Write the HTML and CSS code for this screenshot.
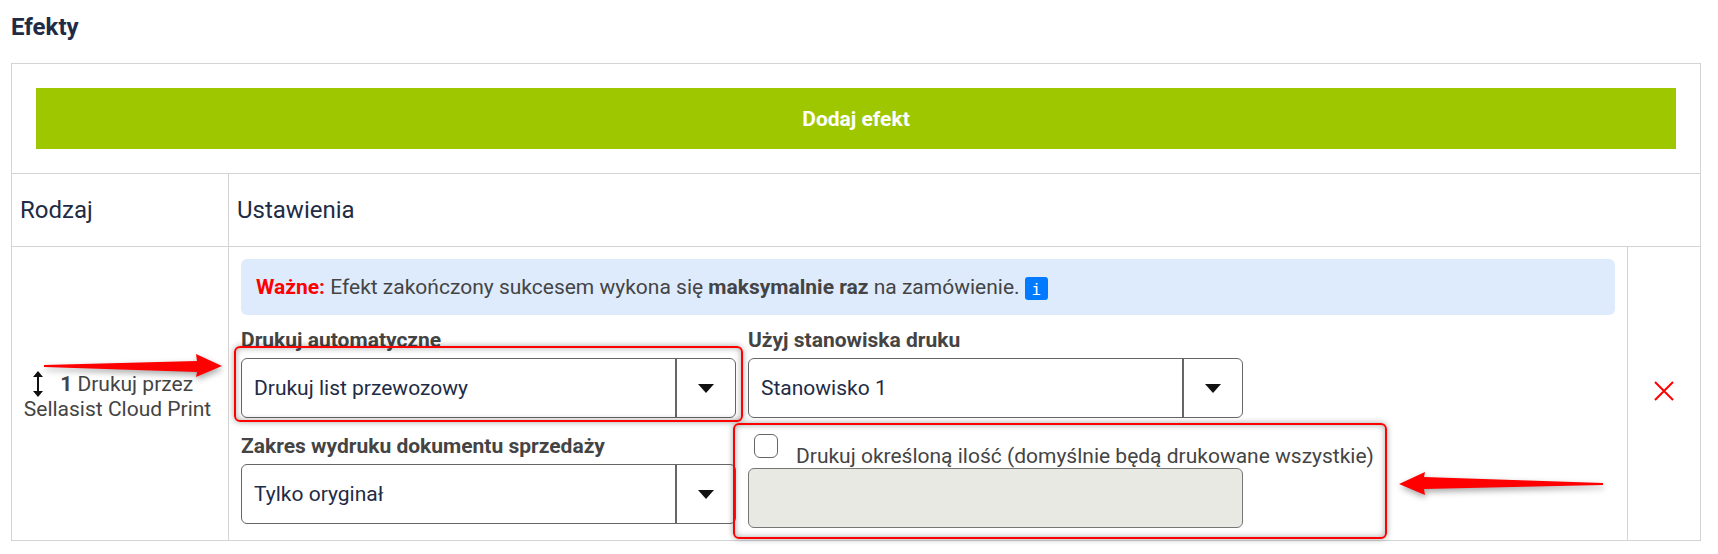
FILE: index.html
```html
<!DOCTYPE html>
<html lang="pl">
  <head>
    <meta charset="utf-8" />
    <title>Efekty</title>
    <link rel="stylesheet" href="styles.css">
  </head>

  <body>
    <h2 class="title">Efekty</h2>

    <table class="effects">
      <colgroup>
        <col class="col-type">
        <col>
        <col class="col-remove">
      </colgroup>
      <tr>
        <td class="add-cell" colspan="3">
          <a class="add-btn" href="#">Dodaj efekt</a>
        </td>
      </tr>
      <tr class="head">
        <td>Rodzaj</td>
        <td colspan="2">Ustawienia</td>
      </tr>
      <tr>
        <td class="type-cell">
          <span class="type-first">
            <svg class="sort-icon" width="12" height="26" viewBox="0 0 12 26">
              <path d="M6 3V23" stroke="#111" stroke-width="2"/>
              <path d="M6 0L11 6H1Z M6 26L11 20H1Z" fill="#111"/>
            </svg>
            <b>1</b> Drukuj przez
          </span><br>Sellasist Cloud Print
        </td>
        <td class="settings-cell">
          <div class="alert">
            <b class="alert-red">Ważne:</b> Efekt zakończony sukcesem wykona się
            <b>maksymalnie raz</b> na zamówienie.
            <span class="info-badge">i</span>
          </div>

          <div class="form-grid">
            <div class="field">
              <div class="field-label">Drukuj automatyczne</div>
              <div class="select">
                <span class="select-value">Drukuj list przewozowy</span>
                <span class="select-btn"><i class="caret"></i></span>
              </div>
            </div>
            <div class="field">
              <div class="field-label">Użyj stanowiska druku</div>
              <div class="select">
                <span class="select-value">Stanowisko 1</span>
                <span class="select-btn"><i class="caret"></i></span>
              </div>
            </div>
            <div class="field">
              <div class="field-label">Zakres wydruku dokumentu sprzedaży</div>
              <div class="select">
                <span class="select-value">Tylko oryginał</span>
                <span class="select-btn"><i class="caret"></i></span>
              </div>
            </div>
            <div class="field">
              <label class="check-row">
                <span class="check-box"></span>
                <span class="check-text">Drukuj określoną ilość (domyślnie będą drukowane wszystkie)</span>
              </label>
              <div class="input-disabled"></div>
            </div>
          </div>
        </td>
        <td class="remove-cell">
          <svg width="20" height="20" viewBox="0 0 20 20">
            <path d="M1 1L19 19M19 1L1 19" stroke="#f00" stroke-width="2"/>
          </svg>
        </td>
      </tr>
    </table>

    <!-- adnotacje na zrzucie -->
    <div class="mark mark-auto"></div>
    <div class="mark mark-qty"></div>
    <svg class="arrows" width="1718" height="554" viewBox="0 0 1718 554">
      <polygon points="44,365 197,361 196,354 222,366 196,377 197,372 44,367"/>
      <polygon points="1399,484 1425,472 1424,477 1603,483 1603,485 1424,489 1425,495"/>
    </svg>
  </body>
</html>
```

FILE: styles.css
```css
html,
body {
  margin: 0;
  background: #fff;
}

body {
  height: 554px;
  overflow: hidden;
  font-family: Roboto, sans-serif;
  font-size: 21px;
  color: #444;
}

.title {
  margin: 0;
  padding: 13px 11px 0;
  height: 63px;
  box-sizing: border-box;
  font-size: 24px;
  line-height: 28px;
  font-weight: 700;
  color: #212b45;
}

/* tabela efektow */
.effects {
  margin-left: 11px;
  width: 1690px;
  table-layout: fixed;
  border-collapse: collapse;
}

.effects td {
  padding: 0;
  border: 1px solid #d4d4d4;
}

.col-type {
  width: 217px;
}

.col-remove {
  width: 73px;
}

.effects .add-cell {
  padding: 24px;
}

.add-btn {
  display: block;
  height: 61px;
  background: #9ec700;
  color: #fff;
  font-weight: 700;
  line-height: 63px;
  text-align: center;
  text-decoration: none;
}

.effects .head td {
  height: 72px;
  padding: 0 8px;
  font-size: 24px;
  color: #212b45;
}

.effects .type-cell {
  padding: 6px 5px 0 0;
  line-height: 25px;
  text-align: center;
}

.type-first {
  margin-right: 10px;
}

.sort-icon {
  margin-right: 11px;
  vertical-align: -6px;
}

.effects .settings-cell {
  padding: 12px 12px 12px 12px;
}

.effects .remove-cell {
  text-align: center;
}

.alert {
  height: 56px;
  padding-left: 15px;
  border-radius: 6px;
  background: #deebfd;
  line-height: 56px;
}

.alert-red {
  color: #f00;
}

.info-badge {
  display: inline-block;
  width: 23px;
  height: 23px;
  border-radius: 3px;
  background: #007bff;
  color: #fff;
  font-family: "DejaVu Sans Mono", monospace;
  font-size: 16px;
  line-height: 25px;
  text-align: center;
  vertical-align: -1px;
}

/* formularz */
.form-grid {
  display: grid;
  grid-template-columns: 495px 495px;
  column-gap: 12px;
  row-gap: 16px;
  margin-top: 13px;
}

.field-label {
  margin-bottom: 6px;
  font-weight: 700;
  line-height: 24px;
}

.select {
  display: flex;
  box-sizing: border-box;
  height: 60px;
  border: 1px solid #666;
  border-radius: 6px;
  color: #212b45;
}

.select-value {
  flex: 1;
  padding-left: 12px;
  line-height: 58px;
}

.select-btn {
  display: flex;
  align-items: center;
  justify-content: center;
  width: 58px;
  border-left: 2px solid #666;
}

.caret {
  border-top: 9px solid #111;
  border-left: 8px solid transparent;
  border-right: 8px solid transparent;
}

.check-row {
  display: flex;
  height: 34px;
}

.check-box {
  flex: none;
  box-sizing: border-box;
  width: 24px;
  height: 24px;
  margin-left: 6px;
  border: 1px solid #666;
  border-radius: 6px;
}

.check-text {
  margin: 10px 0 0 18px;
  line-height: 24px;
  white-space: nowrap;
}

.input-disabled {
  box-sizing: border-box;
  height: 60px;
  border: 1px solid #777;
  border-radius: 6px;
  background: #e9e9e3;
}

/* czerwone ramki i strzalki */
.mark {
  position: absolute;
  box-sizing: border-box;
  border: 2px solid #f00;
  border-radius: 6px;
  box-shadow: 0 0 6px rgba(0, 0, 0, 0.35), inset 0 0 6px rgba(0, 0, 0, 0.35);
}

.mark-auto {
  left: 234px;
  top: 346px;
  width: 509px;
  height: 76px;
}

.mark-qty {
  left: 733px;
  top: 423px;
  width: 654px;
  height: 116px;
}

.arrows {
  position: absolute;
  left: 0;
  top: 0;
  pointer-events: none;
  filter: drop-shadow(1px 3px 3px rgba(0, 0, 0, 0.35));
}

.arrows polygon {
  fill: #f00;
}
```
